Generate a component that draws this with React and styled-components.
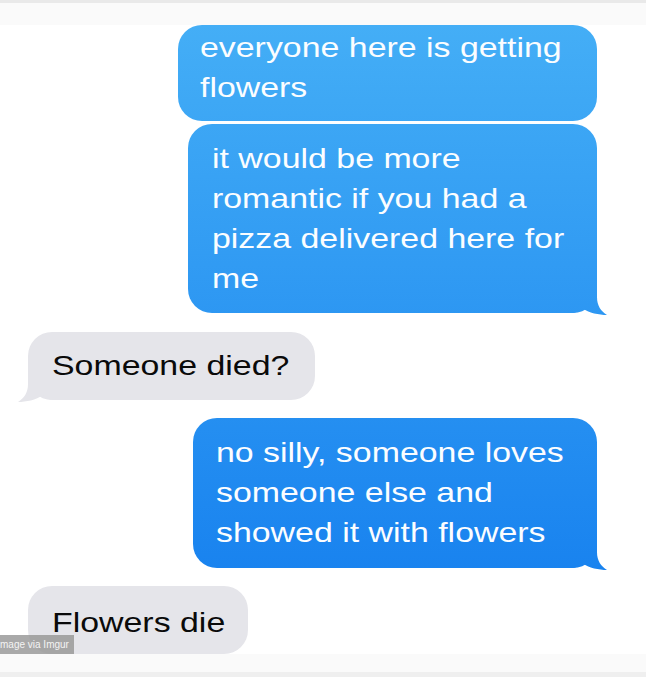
import React from "react";
import styled, { createGlobalStyle } from "styled-components";

const Global = createGlobalStyle`
  html, body { margin: 0; padding: 0; background: #ffffff; }
  body { width: 646px; height: 677px; overflow: hidden; font-family: "Liberation Sans", Arial, sans-serif; }
`;

const Screen = styled.div`
  position: relative;
  width: 646px;
  height: 677px;
  display: flex;
  flex-direction: column;
  background: #ffffff;
  overflow: hidden;
`;

const TopBar = styled.div`
  height: 22px;
  flex: none;
  border-top: 3px solid #e9e9e9;
  background: #fafafa;
`;

const Thread = styled.div`
  display: flex;
  flex-direction: column;
  flex: none;
`;

const Row = styled.div`
  display: flex;
  justify-content: ${(p) => (p.$sent ? "flex-end" : "flex-start")};
  padding: ${(p) => (p.$sent ? "0 49px 0 0" : "0 0 0 28px")};
  margin-top: ${(p) => p.$gap || 0}px;
`;

const SENT_TAIL =
  'path("M0 0 L28 0 L28 12 C28 21 32 26 38 30 C30 30 20 28 13 23 C10 26 6 28 3 28 L0 28 Z")';
const RECV_TAIL =
  'path("M40 0 L12 0 L12 12 C12 21 8 26 2 30 C10 30 20 28 27 23 C30 26 34 28 37 28 L40 28 Z")';

const Bubble = styled.div`
  position: relative;
  box-sizing: border-box;
  width: ${(p) => p.$w}px;
  height: ${(p) => p.$h}px;
  padding: ${(p) => p.$pt}px 0 0 ${(p) => p.$pl || 23}px;
  border-radius: 24px;
  color: ${(p) => (p.$sent ? "#fbfdff" : "#0a0a0a")};
  background: ${(p) =>
    p.$sent
      ? "linear-gradient(to bottom, rgb(68,174,246) 25px, rgb(25,131,239) 568px) fixed"
      : "#e5e5ea"};

  &::after {
    content: "";
    display: ${(p) => (p.$tail ? "block" : "none")};
    position: absolute;
    bottom: -2px;
    ${(p) => (p.$sent ? "right: -12px;" : "left: -12px;")}
    width: 40px;
    height: 30px;
    background: inherit;
    clip-path: ${(p) => (p.$sent ? SENT_TAIL : RECV_TAIL)};
  }
`;

const Text = styled.div`
  position: relative;
  z-index: 1;
  font-family: "Liberation Sans", Arial, Helvetica, sans-serif;
  font-size: 28px;
  line-height: 40px;
  white-space: pre;
  transform: scaleX(1.21);
  transform-origin: left center;
`;

const BottomBar = styled.div`
  flex: none;
  height: 18px;
  background: #fafafa;
  border-bottom: 5px solid #efefef;
`;

const Credit = styled.div`
  position: absolute;
  left: 0;
  top: 635px;
  width: 74px;
  height: 19px;
  display: flex;
  align-items: center;
  overflow: hidden;
  background: rgba(150, 150, 150, 0.82);
  color: #f4f4f4;
  font-family: "Liberation Sans", Arial, sans-serif;
  font-size: 10px;
  white-space: nowrap;
`;

const messages = [
  { sent: true, w: 419, h: 96, pt: 3, pl: 22, gap: 0, text: "everyone here is getting\nflowers" },
  {
    sent: true,
    w: 409,
    h: 189,
    pt: 15,
    pl: 24,
    gap: 3,
    tail: true,
    text: "it would be more\nromantic if you had a\npizza delivered here for\nme",
  },
  { sent: false, w: 287, h: 68, pt: 14, pl: 24, gap: 19, tail: true, text: "Someone died?" },
  {
    sent: true,
    w: 404,
    h: 150,
    pt: 15,
    pl: 23,
    gap: 18,
    tail: true,
    text: "no silly, someone loves\nsomeone else and\nshowed it with flowers",
  },
  { sent: false, w: 220, h: 68, pt: 17, pl: 24, gap: 18, text: "Flowers die" },
];

export default function App() {
  return (
    <>
      <Global />
      <Screen>
        <TopBar />
        <Thread>
          {messages.map((m, i) => (
            <Row key={i} $sent={m.sent} $gap={m.gap}>
              <Bubble
                $sent={m.sent}
                $tail={m.tail}
                $w={m.w}
                $h={m.h}
                $pt={m.pt}
                $pl={m.pl}
              >
                <Text>{m.text}</Text>
              </Bubble>
            </Row>
          ))}
        </Thread>
        <BottomBar />
        <Credit>mage via Imgur</Credit>
      </Screen>
    </>
  );
}
